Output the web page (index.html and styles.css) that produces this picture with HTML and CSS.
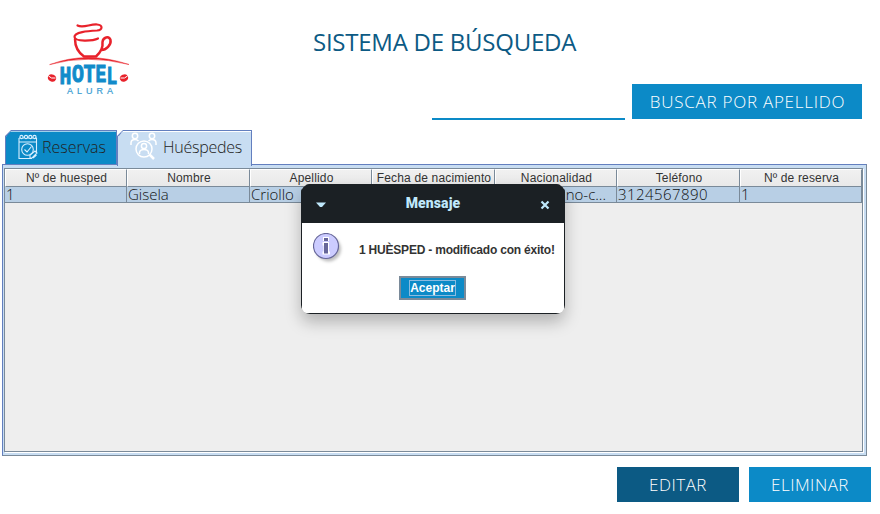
FILE: index.html
```html
<!DOCTYPE html>
<html lang="es">
<head>
<meta charset="utf-8">
<title>Sistema de búsqueda</title>
<link rel="stylesheet" href="styles.css">
</head>
<body>
<header class="top">
  <svg class="logo" viewBox="0 0 100 90" width="100" height="90">
    <g fill="none" stroke="#e8222b" stroke-linecap="round">
      <path d="M10 49.500Q47 35.500 89 49.500Q47 39 10 49.500Z" fill="#e8222b" stroke-width=".5"/>
      <path d="M37.500 10.500C43 13.500 50 9 57 9.500C63 10 63 15 57 15.500C48 16 34 17 34.500 22C35 27 53 26 58 23.500" stroke-width="2.200"/>
      <path d="M35 24C35 33 39 38 44 41.500H56C61 37 63 31 62.500 27C63 22 69 20.500 70.500 25C71.500 30 66 35 61.500 35" stroke-width="2.500"/>
    </g>
    <g fill="#e8222b"><ellipse cx="12" cy="63" rx="4.200" ry="3.500" transform="rotate(25 12 63)"/><ellipse cx="84" cy="63" rx="4.200" ry="3.500" transform="rotate(-25 84 63)"/></g>
    <path d="M8.500 61Q11 64 15.500 63M80.500 63Q85 64 87.500 61" fill="none" stroke="#fff"/>
    <g class="logo-name"><text transform="translate(19.500 68.500) scale(1.100 1.450)">H</text><text transform="translate(32 67) scale(1.100 1.450)">O</text><text transform="translate(43.500 66.500) scale(1.100 1.450)">T</text><text transform="translate(55.500 67) scale(1 1.450)">E</text><text transform="translate(66.500 68.500) scale(1 1.450)">L</text></g>
    <text class="logo-sub" x="27" y="78.500" textLength="46">ALURA</text>
  </svg>
  <h1>SISTEMA DE BÚSQUEDA</h1>
</header>
<div class="search"><input class="query" aria-label="Apellido"><button class="btn find">BUSCAR POR APELLIDO</button></div>
<nav class="tabs">
  <div class="tab reservas">
    <svg width="20" height="26" viewBox="0 0 20 26" fill="none" stroke="#d9efff" stroke-width="1.100"><path d="M1 4V24.500H14M18.500 18V4M1 8H18.500M1 4H2.500M5 4H6.500M9 4H11M13 4H15M17 4H18.500"/><circle cx="3.500" cy="3" r="1.600"/><circle cx="8" cy="3" r="1.600"/><circle cx="12.300" cy="3" r="1.600"/><circle cx="16.500" cy="3" r="1.600"/><circle cx="9.500" cy="15.500" r="5.800"/><path d="M6.500 15.500L9 18L13.500 12.500M12 21L17 17L19 19L14 24H12ZM15 24L18.500 21"/></svg>
    <span>Reservas</span>
  </div>
  <div class="tab huespedes">
    <svg width="27" height="28" viewBox="0 0 27 28" fill="none" stroke="#fff" stroke-width="1.500"><circle cx="5" cy="4" r="2.700"/><circle cx="22" cy="4" r="2.700"/><path d="M1 13V11Q1 7.500 5 7.500Q7 7.500 8.500 9M26 13V11Q26 7.500 22 7.500Q20 7.500 18.500 9"/><circle cx="14" cy="17" r="8"/><circle cx="14" cy="14" r="2.600"/><path d="M9.500 22V20.500Q10 17.500 14 17.500Q18 17.500 18.500 20.500V22"/><path d="M19.500 22.500L24 27" stroke-width="2.500"/></svg>
    <span>Huéspedes</span>
  </div>
</nav>
<main class="pane">
  <div class="scroll">
    <div class="row head"><div>Nº de huesped</div><div>Nombre</div><div>Apellido</div><div>Fecha de nacimiento</div><div>Nacionalidad</div><div>Teléfono</div><div>Nº de reserva</div></div>
    <div class="row data"><div>1</div><div>Gisela</div><div>Criollo</div><div></div><div class="nation">no-c...</div><div class="phone">3124567890</div><div>1</div></div>
  </div>
</main>
<footer class="actions"><button class="btn edit">EDITAR</button><button class="btn">ELIMINAR</button></footer>
<section class="dialog" role="dialog">
  <div class="titlebar">
    <svg width="10" height="6" viewBox="0 0 10 6"><path d="M0 .500H10L6 5H4Z" fill="#bfe8fb"/></svg>
    <strong>Mensaje</strong>
    <svg width="10" height="10" viewBox="0 0 10 10"><path d="M1.500 1.500L8.500 8.500M8.500 1.500L1.500 8.500" stroke="#bfe8fb" stroke-width="2.200"/></svg>
  </div>
  <div class="message">
    <svg width="32" height="32" viewBox="0 0 32 32"><circle class="icon-shadow" cx="15.500" cy="16" r="12.500"/><circle cx="13" cy="13" r="12.500" fill="#ccf" stroke="#669" stroke-width="1.200"/><path d="M10 4H16V8H10ZM9.500 9H16V18.500H17V21.500H9.500V18.500H10.500V12.500H9.500Z" fill="#fff"/><path d="M11 5H15V8H11ZM11 10H15V20.500H11Z" fill="#669"/></svg>
    <p>1 HUÈSPED - modificado con éxito!</p>
  </div>
  <button class="accept"><span>Aceptar</span></button>
</section>
</body>
</html>
```
FILE: styles.css
```css
* { box-sizing: border-box; }
body { margin: 0; width: 880px; height: 514px; overflow: hidden; background: #fff; position: relative; font-family: "Liberation Sans", sans-serif; color: #333; }
button, input { border: 0; margin: 0; padding: 0; border-radius: 0; font: inherit; outline: 0; }
.top { height: 84px; display: flex; padding-left: 40px; }
.logo { margin-top: 15px; flex: none; }
.logo-name { font: bold 18px "Liberation Mono", monospace; fill: #118bca; stroke: #118bca; stroke-width: .7; }
.logo-sub { font: 9px "Liberation Sans", sans-serif; fill: #3a9dd2; stroke: #3a9dd2; stroke-width: .2; }
h1 { margin: 26px 0 0 173px; font: 400 24px/32px "Open Sans", sans-serif; letter-spacing: -.25px; color: #0c5a84; white-space: nowrap; }
.search { height: 46px; display: flex; gap: 7px; padding-left: 432px; }
.query { width: 193px; height: 36px; border-bottom: 2px solid #0c8ac7; background: #fff; }
.btn { width: 122px; height: 35px; background: #0c8ac7; color: #fff; font: 300 17px/35px "Open Sans", sans-serif; letter-spacing: .5px; white-space: nowrap; }
.find { width: 230px; padding-left: 1px; letter-spacing: .75px; }
.tabs { height: 34px; display: flex; padding-left: 5px; }
.tab { position: relative; height: 34px; background: #637fbf; clip-path: polygon(6px 0, 100% 0, 100% 100%, 0 100%, 0 6px); display: flex; align-items: center; font: 300 16px/22px "Open Sans", sans-serif; color: #222; }
.tab::before { content: ""; position: absolute; inset: 2px 1px 0; background: #0c8ac7; box-shadow: 0 -1px #9fd0ea; clip-path: polygon(5px -1px, 100% -1px, 100% 100%, 0 100%, 0 5px); }
.tab > * { position: relative; }
.reservas { width: 112px; padding-left: 13px; gap: 4px; }
.huespedes { width: 135px; height: 36px; padding: 0 0 2px 13px; gap: 6px; z-index: 1; letter-spacing: -.25px; }
.huespedes svg { margin-top: -2px; }
.huespedes::before { background: #c8ddf2; box-shadow: 0 -1px #fff; }
.pane { margin-left: 2px; width: 865px; height: 292px; padding: 3px 0 0 1px; background: #c8ddf2; border: solid; border-width: 1px; border-color: #637fbf #7a8a99 #7a8a99 #637fbf; }
.scroll { height: 284px; width: 859px; background: #eee; border: 1px solid #7a8a99; box-shadow: 1px 1px 0 #fff; }
.row { display: grid; grid-template-columns: 122px 123px 122px 123px 122px 123px 122px; width: 857px; }
.row > div { border-right: 1px solid #7a8a99; border-bottom: 1px solid #7a8a99; white-space: nowrap; }
.head { font-size: 12px; line-height: 17px; text-align: center; letter-spacing: .16px; }
.head > div { height: 18px; padding-left: 1px; background: linear-gradient(#f1f1f1, #e9e9e9); border-left: 1px solid #fff; border-top: 1px solid #fff; }
.data { font: 300 15px/15px "Open Sans", sans-serif; background: #b8cfe5; color: #111; }
.data > div { height: 16px; padding-left: 1px; }
.data .nation { text-align: right; padding-right: 10px; }
.data .phone { letter-spacing: .45px; }
.actions { display: flex; gap: 10px; padding: 11px 0 0 617px; }
.edit { background: #0c5a84; }
.dialog { position: absolute; left: 301px; top: 184px; width: 264px; height: 130px; padding: 1px; border-radius: 9px; background: linear-gradient(#fff, #fff) 1px 1px / 262px 128px no-repeat #1b2024; overflow: hidden; box-shadow: 0 8px 16px rgba(0,0,0,.25); }
.titlebar { height: 39px; margin: -1px -1px 0; padding: 1px 15px 0; background: #1b2024; color: #bfe8fb; display: flex; align-items: center; justify-content: space-between; font: 700 14px/20px Roboto, sans-serif; }
.titlebar svg { margin-top: 2px; }
.titlebar strong { margin-top: -2px; letter-spacing: .1px; }
.message { height: 53px; display: flex; padding: 10px 0 0 11px; gap: 14px; }
.message p { margin: 9px 0 0; font: 700 12px/16px "Liberation Sans", sans-serif; letter-spacing: -.21px; white-space: nowrap; }
.icon-shadow { fill: rgba(0,0,0,.25); filter: blur(1.5px); }
.accept { display: block; margin-left: 97px; width: 67px; height: 24px; border: 2px solid #7a8a99; background: #0c8ac7; color: #fff; font: 700 12px/14px "Liberation Sans", sans-serif; }
.accept span { display: block; width: 47px; height: 16px; margin: 0 auto; border: 1px solid #8bbbe0; white-space: nowrap; }
```
